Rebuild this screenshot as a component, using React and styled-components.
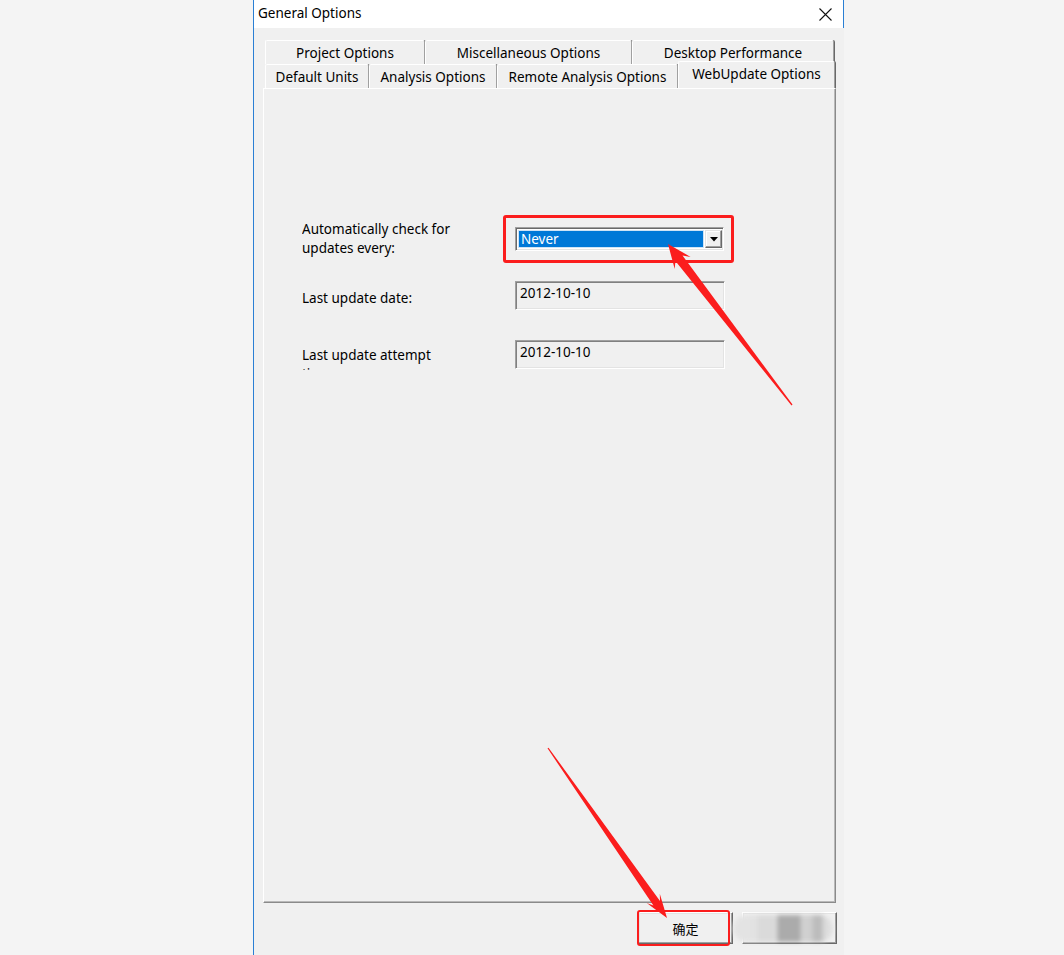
import React from "react";
import styled, { createGlobalStyle } from "styled-components";

const Global = createGlobalStyle`
  html, body { margin: 0; padding: 0; background: #f4f4f4; }
  body { font-family: "Noto Sans", "Noto Sans CJK SC", sans-serif; }
`;

const FONT = `"Noto Sans", "Noto Sans CJK SC", sans-serif`;

const Page = styled.div`
  position: relative;
  width: 1064px;
  height: 955px;
  overflow: hidden;
  background: #f4f4f4;
  display: flex;
`;

const Window = styled.div`
  margin-left: 253px;
  width: 590px;
  height: 955px;
  border-left: 1px solid #2a7fd4;
  display: flex;
  flex-direction: column;
  background: #f0f0f0;
  font-family: ${FONT};
  font-size: 13.5px;
  color: #000;
`;

const TitleBar = styled.div`
  height: 28px;
  flex: none;
  background: #fff;
  border-right: 1px solid #2a7fd4;
  display: flex;
  align-items: center;
  justify-content: space-between;
  padding-left: 4px;
  box-sizing: border-box;
`;

const Title = styled.span`
  font-size: 13.5px;
  line-height: 1;
`;

const CloseButton = styled.div`
  width: 14px;
  height: 14px;
  margin-right: 11px;
  display: flex;
  align-items: center;
  justify-content: center;
`;

const Body = styled.div`
  flex: 1;
  padding: 12px 7px 0 9px;
  display: flex;
  flex-direction: column;
`;

const TabControl = styled.div`
  width: 573px;
  display: flex;
  flex-direction: column;
`;

const TabRow = styled.div`
  display: flex;
  height: 24px;
  padding-left: 2px;
  align-items: flex-end;
`;

const Tab = styled.div`
  width: ${(p) => p.$w}px;
  height: ${(p) => (p.$active ? 27 : 24)}px;
  margin-top: ${(p) => (p.$active ? -3 : 0)}px;
  margin-bottom: ${(p) => (p.$active ? -1 : 0)}px;
  align-self: flex-start;
  box-sizing: border-box;
  border-top: 1px solid #fff;
  border-left: 1px solid #fff;
  border-right: 1px solid #a0a0a0;
  box-shadow: 1px 0 0 #696969;
  border-radius: 2px 2px 0 0;
  background: #f0f0f0;
  display: flex;
  justify-content: center;
  align-items: ${(p) => (p.$active ? "flex-start" : "center")};
  padding-top: ${(p) => (p.$active ? 3 : 0)}px;
  font-size: 13.5px;
  white-space: nowrap;
  position: relative;
  z-index: ${(p) => (p.$active ? 2 : 1)};
`;

const Panel = styled.div`
  height: 815px;
  box-sizing: border-box;
  border-top: 1px solid #fff;
  border-left: 1px solid #fff;
  border-right: 1px solid #8a8a8a;
  border-bottom: 1px solid #8a8a8a;
  box-shadow: inset -1px -1px 0 #b9b9b9;
  background: #f0f0f0;
  padding: 131px 0 0 38px;
  display: flex;
  flex-direction: column;
`;

const FormRow = styled.div`
  display: grid;
  grid-template-columns: 213px 210px;
  align-items: ${(p) => p.$align || "start"};
  margin-top: ${(p) => p.$gap || 0}px;
`;

const Label = styled.div`
  font-size: 13.5px;
  line-height: 19px;
  margin-top: ${(p) => p.$offset || 0}px;
  height: ${(p) => (p.$clip ? `${p.$clip}px` : "auto")};
  overflow: hidden;
`;

const Annotated = styled.div`
  position: relative;
`;

const RedFrame = styled.div`
  position: absolute;
  left: ${(p) => p.$l}px;
  top: ${(p) => p.$t}px;
  width: ${(p) => p.$w}px;
  height: ${(p) => p.$h}px;
  box-sizing: border-box;
  border: ${(p) => p.$b}px solid #fb1d1d;
  border-radius: 3px;
  pointer-events: none;
  z-index: 5;
`;

const SelectBox = styled.div`
  width: 209px;
  height: 24px;
  box-sizing: border-box;
  border: 1px solid;
  border-color: #a0a0a0 #fff #fff #a0a0a0;
  box-shadow: inset 1px 1px 0 #696969, inset -1px -1px 0 #e3e3e3;
  padding: 2px 1px 2px 2px;
  display: flex;
  background: #fff;
`;

const SelectValue = styled.div`
  flex: 1;
  background: #0078d7;
  color: #fff;
  font-size: 13.5px;
  line-height: 18px;
  padding-left: 3px;
  outline: 1px solid #cfe3f5;
  outline-offset: -1px;
`;

const DropButton = styled.div`
  width: 17px;
  margin-left: 1px;
  box-sizing: border-box;
  background: #f0f0f0;
  border: 1px solid;
  border-color: #e3e3e3 #696969 #696969 #e3e3e3;
  box-shadow: inset -1px -1px 0 #a0a0a0, inset 1px 1px 0 #fff;
  display: flex;
  align-items: center;
  justify-content: center;
`;

const TextBox = styled.div`
  width: 210px;
  height: 29px;
  box-sizing: border-box;
  border: 1px solid;
  border-color: #a0a0a0 #fff #fff #a0a0a0;
  box-shadow: inset 1px 1px 0 #808080, inset -1px -1px 0 #e3e3e3;
  background: #f0f0f0;
  padding: 2px 4px;
  font-size: 13.5px;
  line-height: 19px;
`;

const ButtonRow = styled.div`
  margin-top: 9px;
  display: flex;
  justify-content: flex-end;
  gap: 9px;
`;

const Button = styled.div`
  width: 95px;
  height: 32px;
  box-sizing: border-box;
  border: 1px solid;
  border-color: #fff #696969 #696969 #fff;
  box-shadow: inset -1px -1px 0 #a0a0a0, inset 1px 1px 0 #e3e3e3;
  background: #f0f0f0;
  display: flex;
  align-items: center;
  justify-content: center;
  font-size: 13px;
  position: relative;
`;

const Blur = styled.div`
  position: absolute;
  left: -10px;
  top: 2px;
  width: 100px;
  height: 27px;
  border-radius: 14px;
  filter: blur(2px);
  background: linear-gradient(
    to right,
    #e4e4e4 0%,
    #e2e2e2 24%,
    #dadada 25%,
    #dadada 44%,
    #ababab 45%,
    #ababab 67%,
    #d0d0d0 68%,
    #d0d0d0 79%,
    #bcbcbc 80%,
    #bcbcbc 89%,
    #d8d8d8 90%,
    #e2e2e2 100%
  );
`;

const Overlay = styled.svg`
  position: absolute;
  left: 0;
  top: 0;
  pointer-events: none;
  z-index: 10;
`;

function arrowPoints(T, P, headLen, barb, w0, w1) {
  const dx = P[0] - T[0];
  const dy = P[1] - T[1];
  const L = Math.hypot(dx, dy);
  const ux = dx / L;
  const uy = dy / L;
  const nx = -uy;
  const ny = ux;
  const neck = [P[0] - ux * headLen * 0.75, P[1] - uy * headLen * 0.75];
  const bb = [P[0] - ux * headLen, P[1] - uy * headLen];
  const pts = [
    [T[0] + nx * w0, T[1] + ny * w0],
    [neck[0] + nx * w1, neck[1] + ny * w1],
    [bb[0] + nx * barb, bb[1] + ny * barb],
    P,
    [bb[0] - nx * barb, bb[1] - ny * barb],
    [neck[0] - nx * w1, neck[1] - ny * w1],
    [T[0] - nx * w0, T[1] - ny * w0],
  ];
  return pts.map((p) => `${p[0].toFixed(1)},${p[1].toFixed(1)}`).join(" ");
}

const row1 = [
  { label: "Project Options", w: 160 },
  { label: "Miscellaneous Options", w: 207 },
  { label: "Desktop Performance", w: 202 },
];
const row2 = [
  { label: "Default Units", w: 104 },
  { label: "Analysis Options", w: 128 },
  { label: "Remote Analysis Options", w: 181 },
  { label: "WebUpdate Options", w: 157, active: true },
];

export default function App() {
  return (
    <Page>
      <Global />
      <Window>
        <TitleBar>
          <Title>General Options</Title>
          <CloseButton>
            <svg width="13" height="13" viewBox="0 0 13 13">
              <path d="M0.5 0.5 L12.5 12.5 M12.5 0.5 L0.5 12.5" stroke="#111" strokeWidth="1.1" fill="none" />
            </svg>
          </CloseButton>
        </TitleBar>
        <Body>
          <TabControl>
            <TabRow>
              {row1.map((t) => (
                <Tab key={t.label} $w={t.w}>
                  {t.label}
                </Tab>
              ))}
            </TabRow>
            <TabRow>
              {row2.map((t) => (
                <Tab key={t.label} $w={t.w} $active={t.active}>
                  {t.label}
                </Tab>
              ))}
            </TabRow>
            <Panel>
              <FormRow $align="center">
                <Label>
                  Automatically check for
                  <br />
                  updates every:
                </Label>
                <Annotated>
                  <SelectBox>
                    <SelectValue>Never</SelectValue>
                    <DropButton>
                      <svg width="8" height="5" viewBox="0 0 8 5">
                        <path d="M0 0 H8 L4 4.5 Z" fill="#000" />
                      </svg>
                    </DropButton>
                  </SelectBox>
                  <RedFrame $l={-12} $t={-12} $w={231} $h={48} $b={3} />
                </Annotated>
              </FormRow>
              <FormRow $gap={23}>
                <Label $offset={8}>Last update date:</Label>
                <TextBox>2012-10-10</TextBox>
              </FormRow>
              <FormRow $gap={30}>
                <Label $offset={6} $clip={23.5}>
                  Last update attempt
                  <br />
                  time:
                </Label>
                <TextBox>2012-10-10</TextBox>
              </FormRow>
            </Panel>
          </TabControl>
          <ButtonRow>
            <Annotated>
              <Button>确定</Button>
              <RedFrame $l={-1} $t={-2} $w={93} $h={36} $b={2.5} />
            </Annotated>
            <Button>
              <Blur />
            </Button>
          </ButtonRow>
        </Body>
      </Window>
      <Overlay width="1064" height="955" viewBox="0 0 1064 955">
        <polygon points={arrowPoints([792, 405], [668, 244], 24, 10, 0.6, 4.5)} fill="#fb1d1d" />
        <polygon points={arrowPoints([548, 748], [667, 918], 24, 8, 0.6, 4)} fill="#fb1d1d" />
      </Overlay>
    </Page>
  );
}
